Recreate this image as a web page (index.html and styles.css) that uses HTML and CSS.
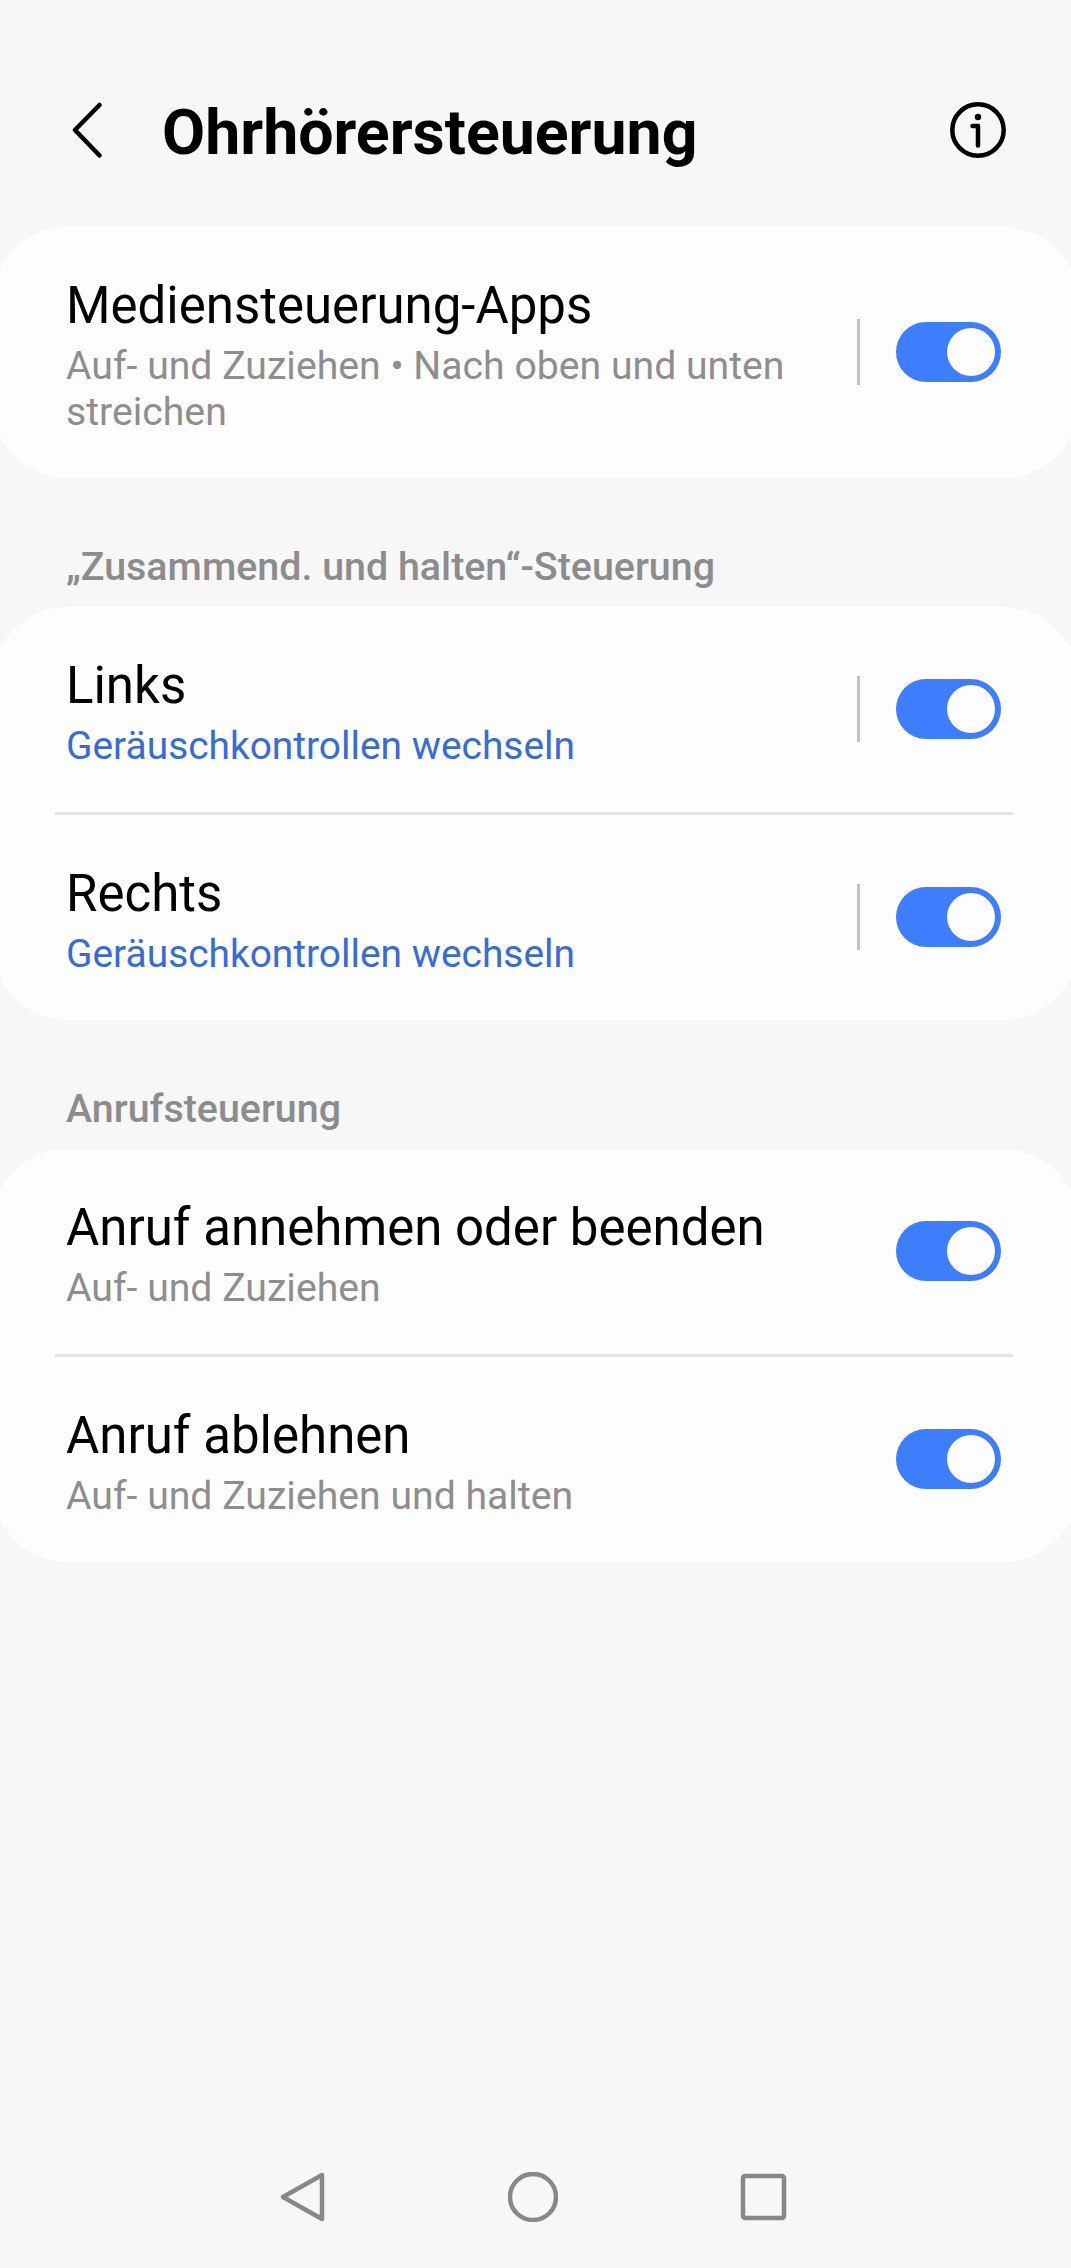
FILE: index.html
```html
<!DOCTYPE html>
<html lang="de">
<head>
    <meta charset="UTF-8">
    <meta name="viewport" content="width=device-width, initial-scale=1.0">
    <title>Ohrhörersteuerung</title>
    <link rel="stylesheet" href="styles.css">
</head>
<body>
    <header class="topbar">
        <svg class="back-icon" width="30" height="56" viewBox="0 0 30 56">
            <path d="M27.5 3 L3 28 L27.5 53.5" fill="none" stroke="#000" stroke-width="4.5" stroke-linecap="round" stroke-linejoin="round"/>
        </svg>
        <h1 class="page-title">Ohrhörersteuerung</h1>
        <svg class="info-icon" width="56" height="56" viewBox="0 0 56 56">
            <circle cx="28" cy="28" r="25.7" fill="none" stroke="#000" stroke-width="4.5"/>
            <circle cx="28" cy="15" r="3.2" fill="#000"/>
            <path d="M22.5 24 H28 V43.5" fill="none" stroke="#000" stroke-width="4.5" stroke-linecap="round" stroke-linejoin="round"/>
        </svg>
    </header>

    <main class="content">
        <section class="card card-first">
            <div class="row row-tall">
                <div class="row-text">
                    <div class="row-title">Mediensteuerung-Apps</div>
                    <div class="row-sub">Auf- und Zuziehen • Nach oben und unten streichen</div>
                </div>
                <span class="row-divider"></span>
                <span class="toggle"><span class="knob"></span></span>
            </div>
        </section>

        <h2 class="section-title">„Zusammend. und halten“-Steuerung</h2>
        <section class="card">
            <div class="row">
                <div class="row-text">
                    <div class="row-title">Links</div>
                    <div class="row-sub blue">Geräuschkontrollen wechseln</div>
                </div>
                <span class="row-divider"></span>
                <span class="toggle"><span class="knob"></span></span>
            </div>
            <hr class="sep">
            <div class="row">
                <div class="row-text">
                    <div class="row-title">Rechts</div>
                    <div class="row-sub blue">Geräuschkontrollen wechseln</div>
                </div>
                <span class="row-divider"></span>
                <span class="toggle"><span class="knob"></span></span>
            </div>
        </section>

        <h2 class="section-title">Anrufsteuerung</h2>
        <section class="card">
            <div class="row">
                <div class="row-text">
                    <div class="row-title">Anruf annehmen oder beenden</div>
                    <div class="row-sub">Auf- und Zuziehen</div>
                </div>
                <span class="toggle"><span class="knob"></span></span>
            </div>
            <hr class="sep">
            <div class="row">
                <div class="row-text">
                    <div class="row-title">Anruf ablehnen</div>
                    <div class="row-sub">Auf- und Zuziehen und halten</div>
                </div>
                <span class="toggle"><span class="knob"></span></span>
            </div>
        </section>
    </main>

    <nav class="navbar">
        <svg width="50" height="50" viewBox="0 0 50 50">
            <polygon points="45,3 6,25 45,47" fill="none" stroke="#888" stroke-width="4.5" stroke-linejoin="round"/>
        </svg>
        <svg width="50" height="50" viewBox="0 0 50 50">
            <circle cx="25" cy="25" r="23" fill="none" stroke="#888" stroke-width="4.5"/>
        </svg>
        <svg width="50" height="50" viewBox="0 0 50 50">
            <rect x="4" y="4" width="41" height="42" rx="2" fill="none" stroke="#888" stroke-width="4.5"/>
        </svg>
    </nav>
</body>
</html>
```

FILE: styles.css
```css
html, body {
    margin: 0;
    padding: 0;
}

body {
    display: flex;
    flex-direction: column;
    height: 2268px;
    overflow: hidden;
    background: #f7f7f8;
    font-family: "Roboto", "Liberation Sans", sans-serif;
}

.topbar {
    display: flex;
    align-items: center;
    height: 108px;
    padding: 76px 65px 0 72px;
    margin-bottom: 43px;
}

.page-title {
    flex: 1;
    margin: 5px 0 0 60px;
    font-size: 62.6px;
    font-weight: 700;
    line-height: 72px;
    color: #000;
}

.content {
    flex: 1;
}

.card {
    margin: 0 -8px;
    padding: 0 8px;
    background: #fdfdfd;
    border-radius: 76px;
}

.row {
    display: flex;
    align-items: center;
    height: 205px;
    padding: 0 70px 0 66px;
}

.row-tall {
    height: 251px;
}

.row-text {
    flex: 1;
    padding: 5px 50px 0 0;
}

.row-title {
    font-size: 51px;
    line-height: 60px;
    color: #000;
}

.row-sub {
    margin-top: 7px;
    font-size: 39.2px;
    line-height: 46px;
    color: #8e8e8e;
}

.row-sub.blue {
    font-size: 38.9px;
    color: #376cd8;
}

.row-divider {
    width: 3px;
    height: 66px;
    margin: -1px 36px 0 0;
    background: #c4c4c4;
}

.toggle {
    display: flex;
    justify-content: flex-end;
    align-items: center;
    width: 105px;
    height: 60px;
    margin-top: -1px;
    padding-right: 6px;
    box-sizing: border-box;
    border-radius: 30px;
    background: #3d7eff;
}

.knob {
    width: 48px;
    height: 48px;
    border-radius: 50%;
    background: #fdfdfd;
}

.sep {
    height: 3px;
    margin: 0 58px 0 55px;
    border: 0;
    background: #e4e4e4;
}

.section-title {
    margin: 67px 0 18px 66px;
    font-size: 39.4px;
    font-weight: 500;
    line-height: 44px;
    color: #8c8c8c;
}

.navbar {
    display: flex;
    justify-content: center;
    gap: 181px;
    padding-right: 5px;
    margin-bottom: 46px;
}
```
